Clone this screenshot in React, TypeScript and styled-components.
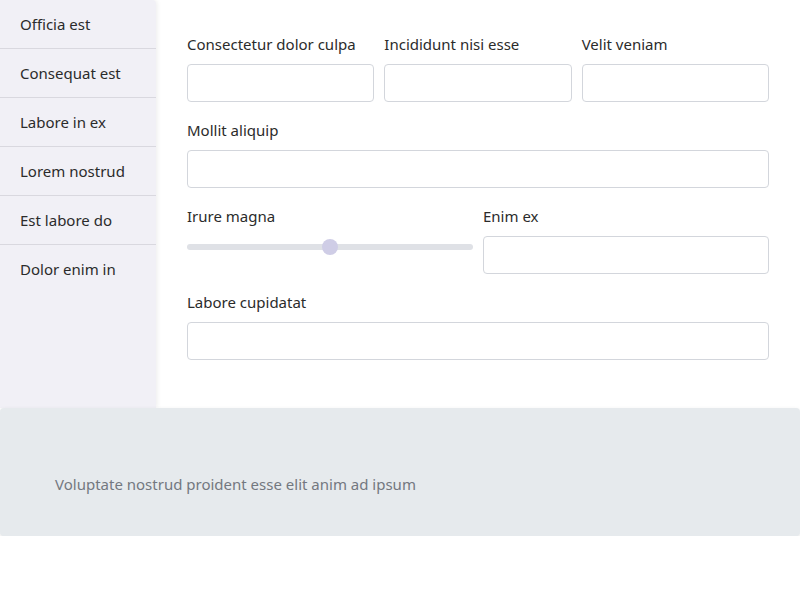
import styled, { createGlobalStyle } from 'styled-components'

const GlobalStyle = createGlobalStyle`
  body {
    margin: 0;
    background: #ffffff;
    font-family: "Noto Sans", "Open Sans", sans-serif;
    color: #212529;
  }
  * { box-sizing: border-box; }
`

const Page = styled.div`
  display: flex;
  flex-direction: column;
  width: 800px;
`

const Top = styled.div`
  display: flex;
  align-items: stretch;
`

const Sidebar = styled.nav`
  width: 156px;
  flex-shrink: 0;
  background: #f1f0f6;
  border-radius: 0 4px 0 0;
  box-shadow: 1px 0 5px rgba(0, 0, 0, 0.08);
  display: flex;
  flex-direction: column;
`

const NavItem = styled.div<{ $last?: boolean }>`
  height: ${(p) => (p.$last ? '48px' : '49px')};
  display: flex;
  align-items: center;
  padding-left: 20px;
  font-size: 15px;
  color: #2b2b2b;
  border-bottom: ${(p) => (p.$last ? 'none' : '1px solid #d9d8df')};
`

const Main = styled.main`
  flex: 1;
  padding: 34px 31px 48px 31px;
  display: flex;
  flex-direction: column;
  gap: 18px;
`

const Row = styled.div<{ $cols: number }>`
  display: grid;
  grid-template-columns: repeat(${(p) => p.$cols}, 1fr);
  column-gap: 10px;
`

const Field = styled.div`
  display: flex;
  flex-direction: column;
  gap: 10px;
`

const Label = styled.label`
  font-size: 15px;
  line-height: 20px;
  color: #2b2b2b;
`

const Input = styled.input`
  height: 38px;
  width: 100%;
  border: 1px solid #d3d6dc;
  border-radius: 4px;
  background: #fff;
  outline: none;
  font: inherit;
`

const SliderWrap = styled.div`
  position: relative;
  height: 38px;
`

const Track = styled.div`
  position: absolute;
  left: 0;
  right: 0;
  top: 8px;
  height: 6px;
  border-radius: 3px;
  background: #dfe1e6;
`

const Thumb = styled.div`
  position: absolute;
  top: 3px;
  width: 16px;
  height: 16px;
  margin-left: -8px;
  border-radius: 50%;
  background: #cfcde6;
`

const Footer = styled.footer`
  height: 128px;
  background: #e6eaed;
  border-radius: 4px;
  box-shadow: 0 2px 5px rgba(0, 0, 0, 0.1);
  padding: 65px 55px 41px;
  font-size: 15px;
  line-height: 22px;
  color: #737880;
`

const navItems = ['Officia est', 'Consequat est', 'Labore in ex', 'Lorem nostrud', 'Est labore do', 'Dolor enim in']

export default function App() {
  const sliderValue = 50
  return (
    <Page>
      <GlobalStyle />
      <Top>
        <Sidebar>
          {navItems.map((item, i) => (
            <NavItem key={item} $last={i === navItems.length - 1}>
              {item}
            </NavItem>
          ))}
        </Sidebar>
        <Main>
          <Row $cols={3}>
            <Field>
              <Label>Consectetur dolor culpa</Label>
              <Input />
            </Field>
            <Field>
              <Label>Incididunt nisi esse</Label>
              <Input />
            </Field>
            <Field>
              <Label>Velit veniam</Label>
              <Input />
            </Field>
          </Row>
          <Row $cols={1}>
            <Field>
              <Label>Mollit aliquip</Label>
              <Input />
            </Field>
          </Row>
          <Row $cols={2}>
            <Field>
              <Label>Irure magna</Label>
              <SliderWrap>
                <Track />
                <Thumb style={{ left: `${sliderValue}%` }} />
              </SliderWrap>
            </Field>
            <Field>
              <Label>Enim ex</Label>
              <Input />
            </Field>
          </Row>
          <Row $cols={1}>
            <Field>
              <Label>Labore cupidatat</Label>
              <Input />
            </Field>
          </Row>
        </Main>
      </Top>
      <Footer>Voluptate nostrud proident esse elit anim ad ipsum</Footer>
    </Page>
  )
}
